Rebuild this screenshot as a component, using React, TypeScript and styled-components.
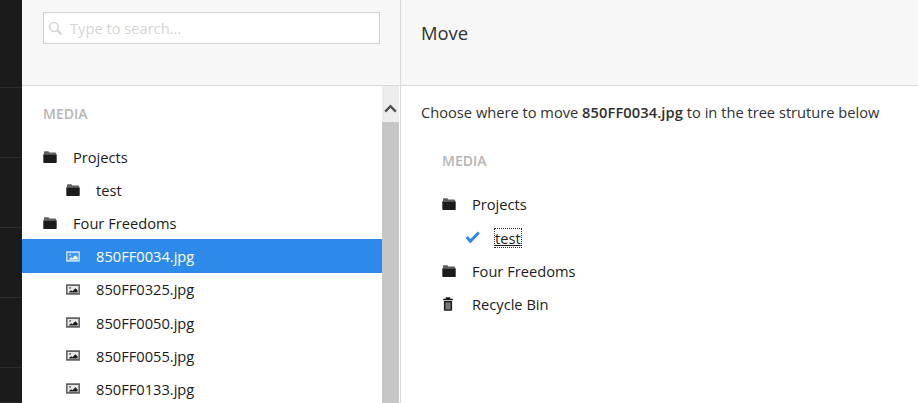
import React from "react";
import styled, { createGlobalStyle } from "styled-components";

const Global = createGlobalStyle`
  html, body { margin: 0; padding: 0; height: 100%; overflow: hidden; background: #fff; }
  #root { height: 100%; }
  * { box-sizing: border-box; }
`;

const Page = styled.div`
  width: 918px;
  height: 403px;
  display: flex;
  overflow: hidden;
  font-family: "Open Sans", sans-serif;
  font-size: 14.67px;
  color: #1b1b1b;
`;

const Rail = styled.div`
  width: 22px;
  flex: none;
  background: #1b1b1b;
  display: flex;
  flex-direction: column;
`;

const RailCell = styled.div<{ $h: number }>`
  height: ${(p) => p.$h}px;
  flex: none;
  border-bottom: 1px solid #2c2c2c;
`;

const LeftColumn = styled.div`
  width: 379px;
  flex: none;
  border-right: 1px solid #d9d9d9;
  display: flex;
  flex-direction: column;
`;

const RightColumn = styled.div`
  flex: 1;
  display: flex;
  flex-direction: column;
`;

const Header = styled.div`
  height: 86px;
  flex: none;
  background: #f7f7f7;
  border-bottom: 1px solid #d9d9d9;
`;

const LeftHeader = styled(Header)`
  padding: 12px 20px 0 21px;
`;

const RightHeader = styled(Header)`
  padding: 20px 20px 0 20px;
  font-size: 18.4px;
  line-height: 25px;
  color: #303030;
`;

const SearchBox = styled.div`
  width: 337px;
  height: 32px;
  background: #fff;
  border: 1px solid #cfcfcf;
  display: flex;
  align-items: center;
  padding-left: 4px;
  gap: 7px;
  color: #d5d5d5;
  line-height: 20px;
  svg { flex: none; }
`;

const LeftBody = styled.div`
  flex: 1;
  min-height: 0;
  display: flex;
`;

const TreeScroll = styled.div`
  flex: 1;
  min-width: 0;
  padding-top: 18px;
`;

const Scrollbar = styled.div`
  width: 17px;
  flex: none;
  margin-right: 1px;
  background: #ededed;
  display: flex;
  flex-direction: column;
`;

const ScrollButton = styled.div`
  height: 36px;
  flex: none;
  display: flex;
  align-items: center;
  justify-content: center;
  padding-top: 8px;
`;

const ScrollThumb = styled.div`
  flex: 1;
  background: #c6c6c6;
`;

const SectionLabel = styled.div<{ $gap: number }>`
  font-size: 14px;
  font-weight: 600;
  line-height: 20px;
  color: #b5b5b5;
  padding-left: 21px;
  margin-bottom: ${(p) => p.$gap}px;
`;

const Row = styled.div<{ $level: number; $selected?: boolean }>`
  height: 33.2px;
  display: flex;
  align-items: center;
  padding-top: 0.44px;
  padding-left: ${(p) => 21 + p.$level * 23}px;
  background: ${(p) => (p.$selected ? "#2e8aea" : "transparent")};
  color: ${(p) => (p.$selected ? "#fff" : "#1b1b1b")};
  white-space: nowrap;
`;

const IconSlot = styled.span`
  width: 30px;
  flex: none;
  display: flex;
  align-items: center;
`;

const TrashSlot = styled(IconSlot)`
  padding-left: 1px;
`;

const Focused = styled.span`
  outline: 1px dotted #333;
  text-decoration: underline;
  line-height: 18px;
`;

const RightBody = styled.div`
  flex: 1;
  padding: 16px 0 0 20px;
`;

const Intro = styled.p`
  margin: 0;
  line-height: 20px;
  color: #303030;
  white-space: nowrap;
  b { font-weight: 600; letter-spacing: 0.1px; }
`;

const MoveTree = styled.div`
  margin-top: 29px;
`;

const FolderIcon = () => (
  <svg width="14" height="12" viewBox="0 0 14 12" aria-hidden="true">
    <path d="M1 1.2C1 .6 1.4.2 2 .2h3.4l1 1.2H12c.6 0 1 .4 1 1v.5H1z" fill="currentColor" opacity=".7" />
    <path d="M.3 3.2h13.4v7.8c0 .6-.4 1-1 1H1.3c-.6 0-1-.4-1-1z" fill="currentColor" />
  </svg>
);

const ImageIcon = () => (
  <svg width="14" height="11" viewBox="0 0 14 11" aria-hidden="true">
    <path fillRule="evenodd" d="M0 .3h14v10.4H0zM1.6 1.9v7.2h10.8V1.9z" fill="currentColor" opacity=".68" />
    <path d="M1.6 1.9h10.8v7.2H1.6z" fill="currentColor" opacity=".1" />
    <path d="M2.6 8.6 5 6.2l1.4 1L9.4 4.2l2.2 2.4v2z" fill="currentColor" />
    <circle cx="4.1" cy="3.9" r=".9" fill="currentColor" opacity=".7" />
  </svg>
);

const TrashIcon = () => (
  <svg width="10" height="14" viewBox="0 0 10 14" aria-hidden="true">
    <path d="M3 .3h4l.5 1.4h2.3v1.5H.2V1.7h2.3z" fill="currentColor" />
    <path d="M.9 4h8.2v9c0 .5-.3.8-.8.8H1.7c-.5 0-.8-.3-.8-.8z" fill="currentColor" />
    <path d="M2.4 5.4h5.2v7H2.4z" fill="#fff" opacity=".4" />
  </svg>
);

const CheckIcon = () => (
  <svg width="15" height="13" viewBox="0 0 15 13" aria-hidden="true">
    <path d="M.6 7 2.6 5 5.4 8 12.8.6 14.8 2.6 5.4 12.4z" fill="#2e8aea" />
  </svg>
);

const SearchIcon = () => (
  <svg width="15" height="15" viewBox="0 0 15 15" aria-hidden="true">
    <circle cx="6" cy="6" r="4.4" fill="none" stroke="#d5d5d5" strokeWidth="1.5" />
    <path d="M9.4 9.4 13.4 13.4" stroke="#d5d5d5" strokeWidth="2.2" />
  </svg>
);

const ChevronUp = () => (
  <svg width="13" height="9" viewBox="0 0 13 9" aria-hidden="true">
    <path d="M1.2 7.6 6.5 2.2l5.3 5.4" fill="none" stroke="#505050" strokeWidth="2.4" />
  </svg>
);

const files = ["850FF0325.jpg", "850FF0050.jpg", "850FF0055.jpg", "850FF0133.jpg"];
const railCells = [88, 70, 70, 70, 70, 35];

export default function App() {
  return (
    <Page>
      <Global />
      <Rail>
        {railCells.map((h, i) => (
          <RailCell key={i} $h={h} />
        ))}
      </Rail>
      <LeftColumn>
        <LeftHeader>
          <SearchBox>
            <SearchIcon />
            <span>Type to search...</span>
          </SearchBox>
        </LeftHeader>
        <LeftBody>
          <TreeScroll>
            <SectionLabel $gap={15.8}>MEDIA</SectionLabel>
            <Row $level={0}>
              <IconSlot><FolderIcon /></IconSlot>Projects
            </Row>
            <Row $level={1}>
              <IconSlot><FolderIcon /></IconSlot>test
            </Row>
            <Row $level={0}>
              <IconSlot><FolderIcon /></IconSlot>Four Freedoms
            </Row>
            <Row $level={1} $selected>
              <IconSlot><ImageIcon /></IconSlot>850FF0034.jpg
            </Row>
            {files.map((f) => (
              <Row $level={1} key={f}>
                <IconSlot><ImageIcon /></IconSlot>{f}
              </Row>
            ))}
          </TreeScroll>
          <Scrollbar>
            <ScrollButton><ChevronUp /></ScrollButton>
            <ScrollThumb />
          </Scrollbar>
        </LeftBody>
      </LeftColumn>
      <RightColumn>
        <RightHeader>Move</RightHeader>
        <RightBody>
          <Intro>
            Choose where to move <b>850FF0034.jpg</b> to in the tree struture below
          </Intro>
          <MoveTree>
            <SectionLabel $gap={16.58}>MEDIA</SectionLabel>
            <Row $level={0}>
              <IconSlot><FolderIcon /></IconSlot>Projects
            </Row>
            <Row $level={1}>
              <IconSlot><CheckIcon /></IconSlot><Focused>test</Focused>
            </Row>
            <Row $level={0}>
              <IconSlot><FolderIcon /></IconSlot>Four Freedoms
            </Row>
            <Row $level={0}>
              <TrashSlot><TrashIcon /></TrashSlot>Recycle Bin
            </Row>
          </MoveTree>
        </RightBody>
      </RightColumn>
    </Page>
  );
}
